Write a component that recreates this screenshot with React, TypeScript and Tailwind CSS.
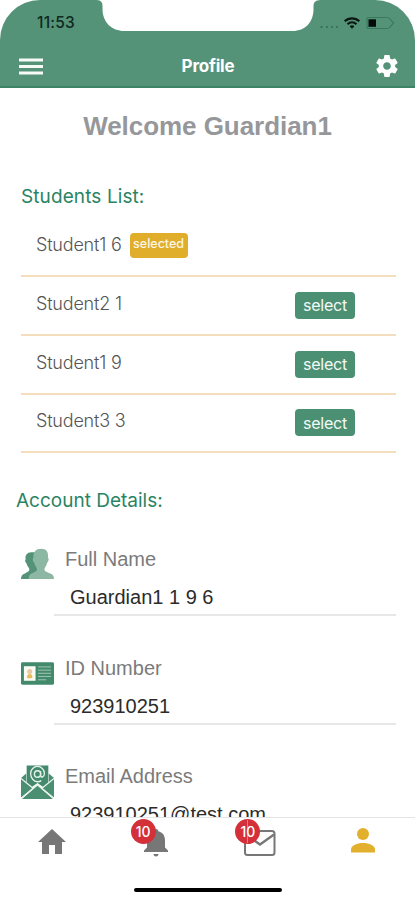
import React, { useState } from "react";

const students = [
  { name: "Student1 6", row: "h-[59px]" },
  { name: "Student2 1", row: "h-[59px]" },
  { name: "Student1 9", row: "h-[59px]" },
  { name: "Student3 3", row: "h-[58px]" },
];

const PeopleIcon = () => (
  <svg width="34" height="32" viewBox="0 0 34 32" className="block">
    <path
      d="M0 31.500c0-3 1-4.500 3.500-5.500L7 24c2-1 2-3 .8-4.500C6.500 18 5.800 16.500 5.500 15 4 14 4 11.500 4.800 11 4 7 6.500 4 10.500 4H17v27.500z"
      fill="#549378"
    />
    <path
      d="M8 31.500c0-3.500 1-5 3.500-6l3.500-1.800c1.800-1 1.800-3 .5-4.700-1-1.500-1.700-3-1.900-4.500-1.600-1-1.900-4.500-.8-5C12.500 3.500 15.500.300 20.800.300S28.500 3.500 27.800 9.500c1.100.5.800 4-.8 5-.2 1.500-.9 3-1.900 4.500-1.300 1.700-1.300 3.700.5 4.700L29.500 25.500c3 1 4.500 2.500 4.500 6z"
      fill="#8bb7a3"
    />
  </svg>
);

const IdCardIcon = () => (
  <svg width="34" height="23" viewBox="0 0 34 23" className="block">
    <rect width="34" height="23" rx="1.500" fill="#43896b" />
    <rect x="3" y="4" width="12" height="15" fill="#fbfbf5" />
    <circle cx="9" cy="9.500" r="2.600" fill="#e9c9a0" />
    <path d="M6.300 16.500v-2c0-1.500 1-2.500 2.700-2.500s2.700 1 2.700 2.500v2z" fill="#e6bd5a" />
    <path d="M17.500 4.700h13.500M17.500 8h13.500M17.500 11.300h13.500M17.500 14.500h13.500M17.500 18h8.500" stroke="#a4c8b8" strokeWidth="1" />
  </svg>
);

const EmailIcon = () => (
  <svg width="34" height="35" viewBox="0 0 35 35" preserveAspectRatio="none" className="block">
    <path d="M0 14 5.500 9.500v9zM35 14 29.500 9.500v9z" fill="#4b8f72" />
    <path d="M6 1.500h23v17l-5.500 4.500-6-4-6 4L6 18.500z" fill="#43896b" />
    <path d="M0 14.500l12.500 9.500L0 33.500zM35 14.500l-12.500 9.500L35 33.500zM1 35l16.500-13.500L34 35z" fill="#4b8f72" />
    <path d="M0 14.500l12.500 9.500M35 14.500l-12.500 9.500M.5 34.200 17.500 20.700l17 13.500" fill="none" stroke="#e5f2eb" strokeWidth="1.300" />
    <circle cx="17.500" cy="10" r="3.300" fill="none" stroke="#e5f2eb" strokeWidth="1.500" />
    <path
      d="M20.800 7v4.300c0 3 4 2 4-1.700 0-4-3.300-7.200-7.300-7.200s-7.300 3.300-7.300 7.400 3.300 7.900 7.300 7.900c1.600 0 3-.4 4-1.100"
      fill="none"
      stroke="#e5f2eb"
      strokeWidth="1.400"
    />
  </svg>
);

const details = [
  { label: "Full Name", value: "Guardian1 1 9 6", icon: <PeopleIcon />, pad: "pb-[2px]" },
  { label: "ID Number", value: "923910251", icon: <IdCardIcon />, pad: "pb-px" },
  { label: "Email Address", value: "923910251@test.com", icon: <EmailIcon />, pad: "pb-[2px]" },
];

const Header = () => (
  <header className="relative h-[88px] shrink-0 rounded-t-[40px] border-b-2 border-[#3d8366] bg-[#549378]">
    {/* Notch */}
    <svg className="absolute left-[95px] top-0" width="228" height="32" viewBox="0 0 228 32">
      <path d="M0 0C5 0 7.500 1 7.500 6v3c0 13 9 22 22 22h168c13 0 21-9 21-22V6c0-5 3-6 9-6z" fill="#fff" />
    </svg>
    <div className="flex h-[46px] items-center justify-between pl-[37px] pr-[20px]">
      <span className="font-['Inter'] text-[15.500px] font-medium leading-none tracking-[0.2px] text-[#10291f]">
        11:53
      </span>
      <div className="flex items-center">
        <svg width="76" height="16" viewBox="0 0 76 16">
          <g fill="#3c6b57">
            <circle cx="2.500" cy="12" r="1.100" />
            <circle cx="8" cy="12" r="1.100" />
            <circle cx="13" cy="12" r="1.100" />
            <circle cx="18" cy="12" r="1.100" />
          </g>
          <g fill="none" stroke="#0b1712" strokeWidth="2.200">
            <path d="M25.700 6.300c4.300-4 10.300-4 14.600 0" />
            <path d="M28.500 9.300c2.700-2.500 6.300-2.500 9 0" />
          </g>
          <path d="M30.600 11.200c1.500-1.200 3.300-1.200 4.800 0L33 13.700z" fill="#0b1712" />
          <path d="M50 2.500h18q2 0 3 1.500l3.500 4-3.500 4q-1 1.500-3 1.500H50q-2 0-2-2v-7q0-2 2-2z" fill="none" stroke="#397a5f" strokeWidth="1.200" />
          <rect x="49.500" y="4.300" width="7.500" height="7.500" fill="#050b08" />
        </svg>
      </div>
    </div>
    <div className="flex h-10 items-center justify-between pl-[19px] pr-[16px]">
      <svg width="24" height="17" viewBox="0 0 24 17" className="block">
        <path d="M0 2h24M0 8.500h24M0 15h24" stroke="#f6fbf8" strokeWidth="3" />
      </svg>
      <h1 className="mr-[2px] font-['Inter'] text-[17px] font-bold leading-none tracking-[-0.2px] text-white">Profile</h1>
      <svg width="24" height="24" viewBox="1 1 22 22" className="block">
        <path
          fill="#fff"
          d="M19.430 12.980c.04-.32.070-.64.070-.98s-.03-.66-.07-.98l2.110-1.650c.19-.15.24-.42.12-.64l-2-3.460c-.12-.22-.39-.3-.61-.22l-2.490 1c-.52-.4-1.080-.73-1.690-.98l-.38-2.650A.488.488 0 0 0 14 2h-4c-.25 0-.46.180-.49.420l-.38 2.650c-.61.250-1.170.590-1.690.980l-2.490-1c-.23-.09-.49 0-.61.220l-2 3.460c-.13.220-.07.490.12.640l2.110 1.650c-.04.320-.07.650-.07.980s.03.660.070.980l-2.110 1.650c-.19.150-.24.420-.12.640l2 3.460c.12.220.39.300.61.220l2.490-1c.52.400 1.080.730 1.690.980l.38 2.650c.03.240.24.420.49.420h4c.25 0 .46-.18.490-.42l.38-2.650c.61-.25 1.170-.59 1.690-.98l2.490 1c.23.090.49 0 .61-.22l2-3.460c.12-.22.070-.49-.12-.64l-2.110-1.650zM12 15.500c-1.930 0-3.500-1.570-3.500-3.500s1.570-3.500 3.500-3.500 3.500 1.570 3.500 3.500-1.570 3.500-3.500 3.500z"
        />
      </svg>
    </div>
  </header>
);

const Badge = ({ className }: { className: string }) => (
  <span
    className={`absolute flex h-[25px] w-[25px] items-center justify-center rounded-full bg-[#d4303a] font-['Inter'] text-[14px] font-medium leading-none text-white ${className}`}
  >
    10
  </span>
);

const BottomNav = () => (
  <nav className="h-[83px] shrink-0 border-t border-[#e4e4e4] bg-white">
    <div className="grid h-[50px] grid-cols-4 items-center justify-items-center">
      <svg width="28" height="26" viewBox="0 0 28 26" className="mb-[3px] ml-px block">
        <path d="M14 0 28 13h-4v12h-7v-9h-6v9H4V13H0z" fill="#777" />
      </svg>
      <div className="relative">
        <svg width="24" height="28" viewBox="0 0 24 28" className="block">
          <path d="M12 0c1.500 0 2.300 1 2.300 2.200C18.500 3.300 21 6.500 21 11v7.500l3 3V23H0v-1.500l3-3V11c0-4.500 2.500-7.700 6.700-8.800C9.700 1 10.500 0 12 0zM9.500 25h5c0 1.500-1 2.500-2.500 2.500S9.500 26.500 9.500 25z" fill="#777" />
        </svg>
        <Badge className="-left-[13px] -top-[10px]" />
      </div>
      <div className="relative ml-[2px]">
        <svg width="32" height="26" viewBox="0 0 32 26" className="block">
          <rect x="1" y="1" width="29.500" height="24" rx="2.500" fill="none" stroke="#777" strokeWidth="2" />
          <path d="M2 4.500 16 14.500 30 4.500" fill="none" stroke="#777" strokeWidth="2.400" />
        </svg>
        <Badge className="-left-[9px] -top-[11px]" />
        <span className="absolute left-[3px] -top-[10px] h-[23px] w-px bg-white/40" />
      </div>
      <svg width="24" height="25" viewBox="0 0 24 25" className="mb-[6px] block">
        <circle cx="12" cy="6" r="6" fill="#e2b02c" />
        <path d="M0 24.500v-3C0 17.500 6 15 12 15s12 2.500 12 6.500v3z" fill="#e2b02c" />
      </svg>
    </div>
    <div className="mx-auto mt-[20px] h-[4px] w-[148px] rounded-full bg-black" />
  </nav>
);

const App = () => {
  const [selected, setSelected] = useState(0);

  return (
    <div className="flex h-[900px] w-[415px] flex-col overflow-hidden bg-white">
      <Header />
      <main className="min-h-0 flex-1 overflow-hidden">
        <h1 className="mt-[22px] text-center font-['Liberation_Sans'] text-[26px] font-bold leading-8 tracking-[-0.05px] text-[#96979a]">
          Welcome Guardian1
        </h1>

        <section className="mt-[41px] pl-[21px] pr-[19px]">
          <h2 className="font-['Inter'] text-[19px] leading-7 tracking-[0.1px] text-[#2a8463]">Students List:</h2>
          <ul className="mt-[7px]">
            {students.map((student, i) => (
              <li
                key={i}
                className={`flex items-center border-b-2 border-[#f4ddbd] pl-[15px] pr-[41px] ${student.row}`}
              >
                <span className="pb-[4px] font-['Inter'] text-[18px] font-light leading-none tracking-[-0.2px] text-[#555]">
                  {student.name}
                </span>
                {selected === i ? (
                  <span className="mb-[2px] ml-[8px] flex h-[25px] w-[58px] items-center justify-center rounded bg-[#e0ae2b] pb-[2px] font-['Inter'] text-[12.500px] font-medium leading-none text-[#fdf6e2]">
                    selected
                  </span>
                ) : (
                  <button
                    onClick={() => setSelected(i)}
                    className="mb-px ml-auto flex h-[27px] w-[60px] cursor-pointer items-center justify-center rounded bg-[#4b9073] font-['Inter'] text-[16px] leading-none tracking-[-0.2px] text-[#f3faf6]"
                  >
                    select
                  </button>
                )}
              </li>
            ))}
          </ul>
        </section>

        <section className="mt-[34px] pl-4 pr-[19px]">
          <h2 className="font-['Inter'] text-[19px] leading-7 text-[#2a8463]">Account Details:</h2>
          <div className="mt-[27px]">
            {details.map((item) => (
              <div key={item.label} className="flex h-[108.500px]">
                <div className={`flex h-[46px] w-[38px] shrink-0 items-center justify-center pl-[5px] ${item.pad}`}>
                  {item.icon}
                </div>
                <div className="flex-1">
                  <p className="ml-[11px] mt-[5px] font-['Liberation_Sans'] text-[20px] leading-6 text-[#7b7b7b]">
                    {item.label}
                  </p>
                  <p className="h-[45px] border-b-2 border-[#e7e7e7] pl-4 pt-[14px] font-['Liberation_Sans'] text-[20px] leading-6 text-[#2b2b2b]">
                    {item.value}
                  </p>
                </div>
              </div>
            ))}
          </div>
        </section>
      </main>
      <BottomNav />
    </div>
  );
};

export default App;
